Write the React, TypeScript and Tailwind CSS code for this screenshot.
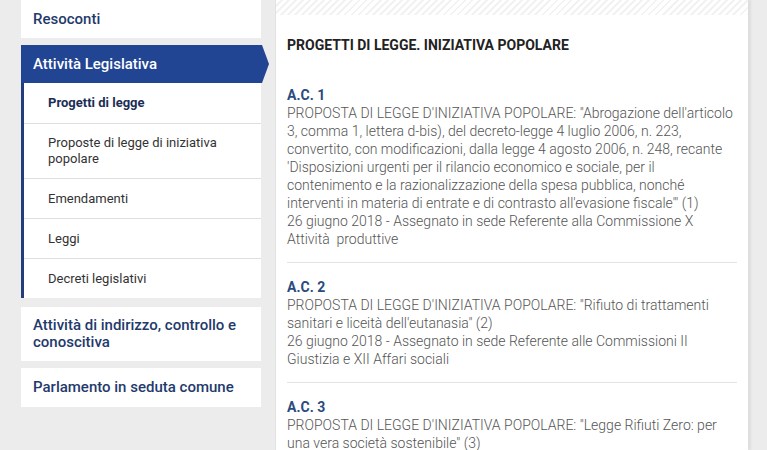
import React from "react";

const subItems = [
  { label: "Progetti di legge", active: true },
  { label: "Proposte di legge di iniziativa popolare" },
  { label: "Emendamenti" },
  { label: "Leggi" },
  { label: "Decreti legislativi" },
];

// lines are kept as in the source page so wrapping matches
const atti = [
  {
    code: "A.C. 1",
    lines: [
      "PROPOSTA DI LEGGE D'INIZIATIVA POPOLARE: \"Abrogazione dell'articolo",
      "3, comma 1, lettera d-bis), del decreto-legge 4 luglio 2006, n. 223,",
      "convertito, con modificazioni, dalla legge 4 agosto 2006, n. 248, recante",
      "'Disposizioni urgenti per il rilancio economico e sociale, per il",
      "contenimento e la razionalizzazione della spesa pubblica, nonché",
      "interventi in materia di entrate e di contrasto all'evasione fiscale'\" (1)",
      "26 giugno 2018 - Assegnato in sede Referente alla Commissione X",
      "Attività\u00a0 produttive",
    ],
  },
  {
    code: "A.C. 2",
    lines: [
      "PROPOSTA DI LEGGE D'INIZIATIVA POPOLARE: \"Rifiuto di trattamenti",
      "sanitari e liceità dell'eutanasia\" (2)",
      "26 giugno 2018 - Assegnato in sede Referente alle Commissioni II",
      "Giustizia e XII Affari sociali",
    ],
  },
  {
    code: "A.C. 3",
    lines: [
      "PROPOSTA DI LEGGE D'INIZIATIVA POPOLARE: \"Legge Rifiuti Zero: per",
      "una vera società sostenibile\" (3)",
    ],
  },
];

function SideBox({ children, className = "" }: { children: React.ReactNode; className?: string }) {
  return (
    <div className={`bg-white px-3 text-[15px] font-medium leading-[17px] text-[#1f3a6c] ${className}`}>
      {children}
    </div>
  );
}

export default function App() {
  return (
    <div className="flex h-[450px] items-start gap-[14px] overflow-hidden bg-[#ececec] pl-[21px] font-['Roboto',sans-serif]">
      {/* sidebar */}
      <nav className="flex w-[240px] flex-col">
        <SideBox className="flex h-[38px] items-center">Resoconti</SideBox>

        <div className="mt-[7px]">
          <div className="flex h-[38px] w-[248px] items-center bg-[#214493] px-3 text-[15px] font-medium text-white [clip-path:polygon(0_0,241px_0,248px_50%,241px_100%,0_100%)]">
            Attività Legislativa
          </div>
          <ul className="border-l-[3px] border-[#223c7c] bg-white">
            {subItems.map((s, i) => (
              <li
                key={s.label}
                className={`flex items-center pl-[24px] pr-8 text-[13px] leading-[16px] ${
                  i > 0 ? "border-t border-[#dedede]" : ""
                } ${s.label.length > 25 ? "h-[55px]" : "h-[40px]"} ${
                  s.active ? "font-bold text-[#1b2d55]" : "text-[#333]"
                }`}
              >
                {s.label}
              </li>
            ))}
          </ul>
        </div>

        <SideBox className="mt-[9px] flex h-[54px] items-center">
          Attività di indirizzo, controllo e conoscitiva
        </SideBox>
        <SideBox className="mt-[7px] flex h-[39px] items-center">Parlamento in seduta comune</SideBox>
      </nav>

      {/* main */}
      <main className="w-[473px] self-stretch border-l border-[#e2e2e2] bg-white shadow-[3px_0_2px_rgba(0,0,0,0.06)]">
        <div className="h-[15px] bg-[repeating-linear-gradient(135deg,#ffffff_0px,#ffffff_3px,#f2f2f2_3px,#f2f2f2_5px)]" />
        <div className="px-[11px] pt-[21px]">
          <h2 className="text-[14px] font-bold leading-[18px] text-[#222]">
            PROGETTI DI LEGGE. INIZIATIVA POPOLARE
          </h2>
          <div className="mt-[17px]">
            {atti.map((a) => (
              <div key={a.code} className="border-b border-[#e3e3e3] pb-[14px] pt-[15px]">
                <div className="text-[14px] font-bold leading-[18px] text-[#2b4a7e]">{a.code}</div>
                <p className="whitespace-nowrap text-[14px] font-light leading-[18px] text-[#555]">
                  {a.lines.map((l, i) => (
                    <React.Fragment key={i}>
                      {i > 0 && <br />}
                      {l}
                    </React.Fragment>
                  ))}
                </p>
              </div>
            ))}
          </div>
        </div>
      </main>
    </div>
  );
}
